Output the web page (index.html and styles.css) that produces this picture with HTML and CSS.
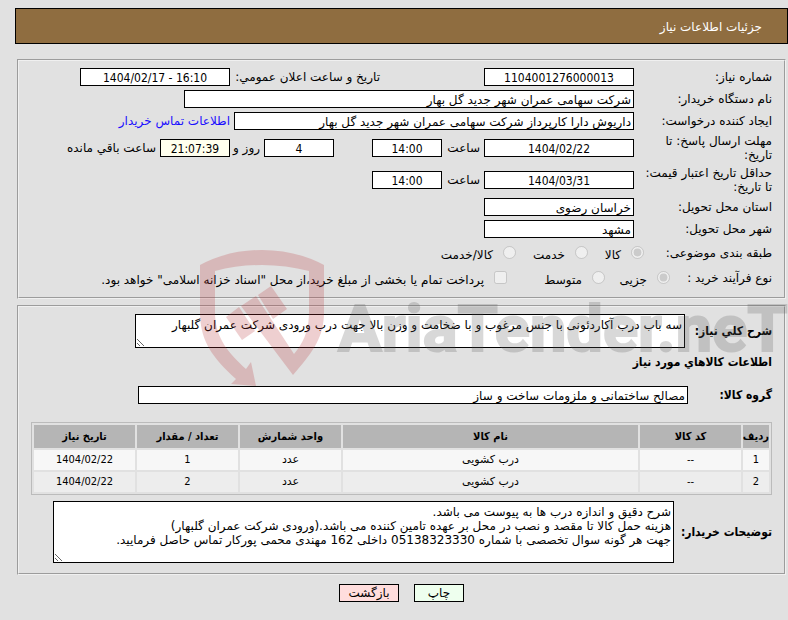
FILE: index.html
```
<!DOCTYPE html>
<html lang="fa" dir="rtl">
<head>
  <meta charset="UTF-8" />
  <meta name="viewport" content="width=device-width, initial-scale=1.0" />
  <title>جزئیات اطلاعات نیاز</title>
  <link rel="stylesheet" href="styles.css">
</head>
<body>
  <h1 class="titlebar">جزئیات اطلاعات نیاز</h1>

  <form class="page">
    <fieldset class="panel info">
      <div class="row">
        <label class="name" for="needNo">شماره نیاز:</label>
        <input class="box w150 center" id="needNo" value="1104001276000013" readonly>
        <label class="far" for="announce">تاریخ و ساعت اعلان عمومي:</label>
        <input class="box w150 center" id="announce" value="1404/02/17 - 16:10" dir="ltr" readonly>
      </div>
      <div class="row">
        <label class="name" for="buyer">نام دستگاه خریدار:</label>
        <input class="box w450" id="buyer" value="شرکت سهامی عمران شهر جدید گل بهار" readonly>
      </div>
      <div class="row">
        <label class="name" for="creator">ایجاد کننده درخواست:</label>
        <input class="box w400" id="creator" value="داریوش دارا کارپرداز شرکت سهامی عمران شهر جدید گل بهار" readonly>
        <a href="#">اطلاعات تماس خریدار</a>
      </div>
      <div class="row tall">
        <label class="name" for="replyDate">مهلت ارسال پاسخ: تا<br>تاریخ:</label>
        <input class="box w150 center" id="replyDate" value="1404/02/22" readonly>
        <label class="hour" for="replyHour">ساعت</label>
        <input class="box w70 center" id="replyHour" value="14:00" readonly>
        <input class="box w70 center days" id="days" value="4" readonly>
        <label class="day-label" for="days">روز و</label>
        <input class="box w70 center remain" id="remain" value="21:07:39" readonly>
        <label for="remain">ساعت باقي مانده</label>
      </div>
      <div class="row tall">
        <label class="name" for="priceDate">حداقل تاریخ اعتبار قیمت:<br>تا تاریخ:</label>
        <input class="box w150 center" id="priceDate" value="1404/03/31" readonly>
        <label class="hour" for="priceHour">ساعت</label>
        <input class="box w70 center" id="priceHour" value="14:00" readonly>
      </div>
      <div class="row">
        <label class="name" for="province">استان محل تحویل:</label>
        <input class="box w150" id="province" value="خراسان رضوی" readonly>
      </div>
      <div class="row">
        <label class="name" for="city">شهر محل تحویل:</label>
        <input class="box w150" id="city" value="مشهد" readonly>
      </div>
      <div class="row choices">
        <span class="caption">طبقه بندی موضوعی:</span>
        <input type="radio" name="kind" id="goods" checked disabled>
        <label class="kind" for="goods">کالا</label>
        <input type="radio" name="kind" id="service" disabled>
        <label class="kind wide" for="service">خدمت</label>
        <input type="radio" name="kind" id="both" disabled>
        <label for="both">کالا/خدمت</label>
      </div>
      <div class="row choices">
        <span class="caption short">نوع فرآیند خرید :</span>
        <input type="radio" name="process" id="small" checked disabled>
        <label class="size" for="small">جزیی</label>
        <input type="radio" name="process" id="medium" disabled>
        <label class="size wide" for="medium">متوسط</label>
        <input type="checkbox" id="treasury" disabled>
        <label for="treasury">پرداخت تمام یا بخشی از مبلغ خرید،از محل "اسناد خزانه اسلامی" خواهد بود.</label>
      </div>
    </fieldset>

    <fieldset class="panel details">
      <div class="block summary">
        <label class="strong" for="summary">شرح کلي نیاز:</label>
        <textarea class="box" id="summary" readonly>سه باب درب آکاردئونی با جنس مرغوب و با ضخامت و وزن بالا جهت درب ورودی شرکت عمران گلبهار</textarea>
      </div>
      <h2>اطلاعات کالاهاي مورد نیاز</h2>
      <div class="block group">
        <label class="strong" for="group">گروه کالا:</label>
        <input class="box" id="group" value="مصالح ساختمانی و ملزومات ساخت و ساز" readonly>
      </div>

      <table>
        <thead>
          <tr>
            <th class="col-row">ردیف</th>
            <th class="col">کد کالا</th>
            <th>نام کالا</th>
            <th class="col">واحد شمارش</th>
            <th class="col">تعداد / مقدار</th>
            <th class="col">تاریخ نیاز</th>
          </tr>
        </thead>
        <tbody>
          <tr>
            <td class="num">1</td>
            <td class="num">--</td>
            <td>درب کشویی</td>
            <td>عدد</td>
            <td class="num">1</td>
            <td class="num">1404/02/22</td>
          </tr>
          <tr>
            <td class="num">2</td>
            <td class="num">--</td>
            <td>درب کشویی</td>
            <td>عدد</td>
            <td class="num">2</td>
            <td class="num">1404/02/22</td>
          </tr>
        </tbody>
      </table>

      <div class="block notes">
        <label class="strong" for="notes">توضیحات خریدار:</label>
        <textarea class="box" id="notes" readonly>شرح دقیق و اندازه درب ها به پیوست می باشد.
هزینه حمل کالا تا مقصد و نصب در محل بر عهده تامین کننده می باشد.(ورودی شرکت عمران گلبهار)
جهت هر گونه سوال تخصصی با شماره 05138323330 داخلی 162 مهندی محمی پورکار تماس حاصل فرمایید.</textarea>
      </div>
    </fieldset>

    <div class="buttons">
      <button type="button" class="print">چاپ</button>
      <button type="button" class="back">بازگشت</button>
    </div>
  </form>

  <svg class="watermark" width="588" height="140" viewBox="0 0 588 140" direction="ltr" aria-hidden="true">
    <g fill="#ba3337">
      <path d="M0 15 Q28 0 62 0 Q96 0 124 15 V62 C124 88 112 103 93 125 L41 56 L56 46 L94 104 C104 92 109 80 109 62 V21 Q86 15 62 15 Q38 15 15 21 V62 C15 86 26 101 46 119 L51 112 L56 136 L31 134 L36 129 C10 106 0 88 0 62 Z"/>
      <path d="M26 67 L39 57 L55 81 L42 90 Z"/>
      <path d="M58 45 L71 36 L87 59 L73 69 Z"/>
    </g>
    <text x="138" y="101" fill="#5a5a5a" stroke="#5a5a5a">AriaTender.neT</text>
  </svg>
</body>
</html>
```
FILE: styles.css
```
* {
  box-sizing: border-box;
}

body {
  position: relative;
  margin: 8px 0 0 15px;
  background: #e1e1e1;
  color: #000;
  font-family: 'DejaVu Sans', sans-serif;
  font-size: 12px;
  line-height: 14px;
}

input, textarea, button {
  font: inherit;
  color: inherit;
}

.titlebar {
  margin: 0 0 15px;
  padding: 11px 25px;
  height: 36px;
  border: 1px solid #000;
  background: #8f6d40;
  color: #fff;
  font-size: 12px;
  font-weight: normal;
}

.page {
  margin: 0 2px;
}

.panel {
  min-width: 0;
  margin: 0 0 6px;
  border: 2px groove #f0f0f0;
}

.info {
  padding: 5px 12px 7px;
}

.row {
  display: flex;
  align-items: center;
  gap: 4px;
  height: 22px;
  white-space: nowrap;
}

.tall {
  height: 32px;
}

.name {
  width: 134px;
}

.box {
  height: 18px;
  margin: 0;
  padding: 1px 2px 0;
  border: 1px solid #000;
  border-radius: 0;
  background: #fff;
}

.center {
  text-align: center;
}

.center, .num {
  font-family: 'DejaVu Sans Condensed', 'DejaVu Sans', sans-serif;
}

.w70 { width: 70px; }
.w150 { width: 150px; }
.w400 { width: 400px; }
.w450 { width: 450px; }

.far {
  width: 146px;
  margin-right: 100px;
}

.hour {
  width: 34px;
}

.days {
  margin-right: 34px;
}

.day-label {
  width: 26px;
}

.remain {
  background: #ffffee;
}

a {
  color: #1a0dff;
  text-decoration: none;
}

.choices {
  height: 25px;
  gap: 10px;
}

.choices input {
  width: 13px;
  height: 13px;
  margin: 0;
}

.choices label {
  padding-top: 4px;
}

.caption {
  width: 118px;
}

.short {
  width: 92px;
}

.kind {
  width: 23px;
}

.kind.wide {
  width: 39px;
}

.size {
  width: 32px;
}

.size.wide {
  width: 65px;
}

.details {
  padding: 7px 12px 10px;
}

.block {
  display: flex;
  align-items: center;
  gap: 4px;
}

.strong, h2 {
  font-family: 'DejaVu Sans Condensed', 'DejaVu Sans', sans-serif;
  font-size: 12px;
  font-weight: bold;
  white-space: nowrap;
}

textarea {
  resize: both;
}

.summary .strong {
  width: 83px;
}

.summary .box {
  width: 550px;
  height: 34px;
}

h2 {
  margin: 7px 0 17px;
}

.group .strong {
  width: 80px;
}

.group .box {
  width: 550px;
}

table {
  width: 100%;
  margin: 18px 0 6px;
  border: 1px solid #bbb;
  border-spacing: 2px;
  table-layout: fixed;
  font-size: 11px;
  text-align: center;
}

th, td {
  height: 20px;
  padding: 0;
  background: #ededed;
}

th {
  height: 23px;
  background: #b5b5b5;
  font-family: 'DejaVu Sans Condensed', 'DejaVu Sans', sans-serif;
}

tbody tr:first-child td {
  background: #f7f7f7;
}

.col {
  width: 101px;
}

.col-row {
  width: 26px;
}

.notes .strong {
  width: 94px;
}

.notes .box {
  width: 621px;
  height: 62px;
}

.block textarea {
  padding: 3px 2px;
}

.buttons {
  display: flex;
  justify-content: center;
  gap: 15px;
  margin-top: 9px;
}

button {
  height: 18px;
  padding: 0;
  border: 1px solid #000;
  cursor: pointer;
}

.print {
  width: 50px;
  background: #eeffee;
}

.back {
  width: 60px;
  background: #ffdddd;
}

.watermark {
  position: absolute;
  top: 242px;
  left: 185px;
  opacity: 0.23;
  pointer-events: none;
}

.watermark text {
  font-family: Roboto, 'Liberation Sans', sans-serif;
  font-size: 65px;
  font-weight: bold;
  stroke-width: 2px;
}
```
